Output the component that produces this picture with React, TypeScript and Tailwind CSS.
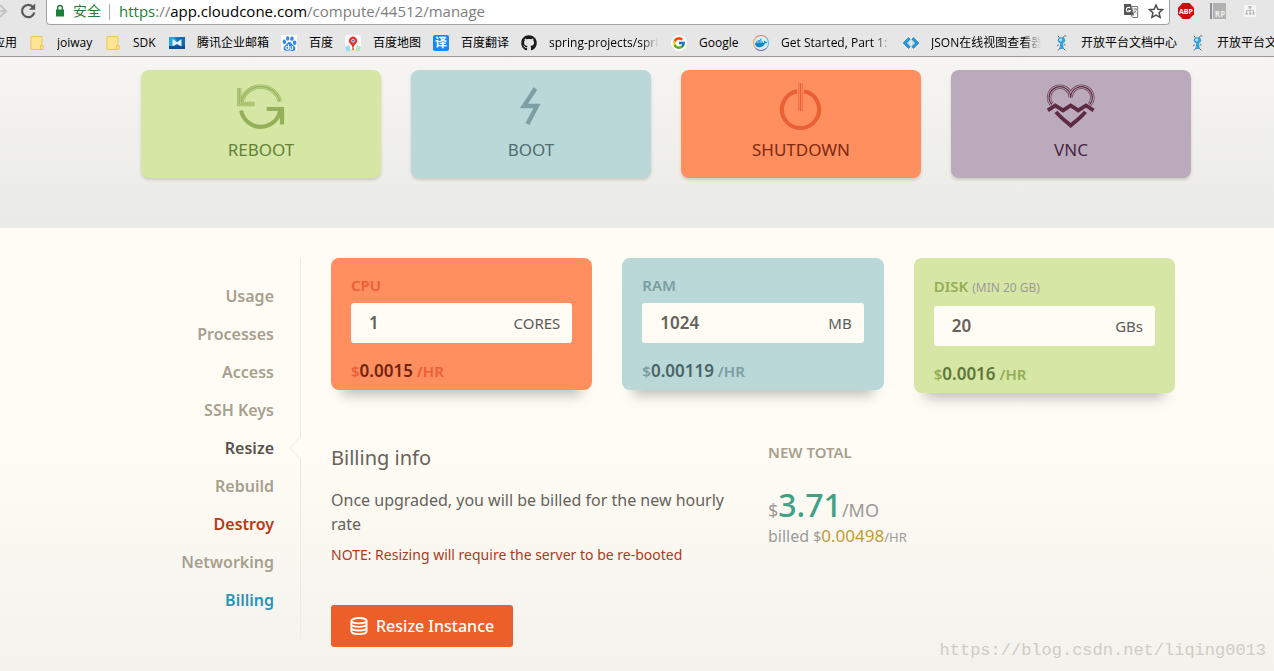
import type { ReactNode } from "react";
import { FaGithub, FaDocker } from "react-icons/fa";
import { FcGoogle } from "react-icons/fc";
import { SiBaidu } from "react-icons/si";

const FolderIcon = () => (
  <svg viewBox="0 0 16 16" className="size-4 shrink-0" aria-hidden="true">
    <path d="M2 1.500h11v9.500h1.200v3.500H2z" fill="#ffe593" stroke="#eec751" />
    <path d="M11.500 14v-3.500h2" fill="none" stroke="#eec751" />
  </svg>
);

const MailIcon = () => (
  <svg viewBox="0 0 16 16" className="size-4 shrink-0" aria-hidden="true">
    <path d="M0 2h16v12H0z" fill="#1267ad" />
    <path d="M0 2h11L0 14z" fill="#2aa5de" />
    <path d="M0 11h16v3H0z" fill="#0b4f94" />
    <path d="M3.500 4L8 7l4.500-3v7.500L8 9l-4.500 2.500z" fill="#dff1fa" />
    <path d="M5 2h6L8 6z" fill="#1877bb" />
  </svg>
);

const PawIcon = () => (
  <span className="flex size-4 shrink-0 items-center justify-center bg-white">
    <SiBaidu className="size-[15px] text-[#3385ff]" aria-hidden="true" />
  </span>
);

const MapIcon = () => (
  <svg viewBox="0 0 16 16" className="size-4 shrink-0" aria-hidden="true">
    <rect width="16" height="16" rx="2" fill="#fafafa" />
    <path d="M0 12l4-2 2 6H1z" fill="#9adcf7" />
    <path d="M16 12l-4-2-2 6h5z" fill="#b5e6c0" />
    <path d="M5 16l3-3 3 3z" fill="#ffe08a" />
    <path d="M8 12L4.600 8a4.100 4.100 0 1 1 6.800 0z" fill="#e8352e" />
    <circle cx="8" cy="5.800" r="1.700" fill="#fff" />
    <circle cx="8" cy="5.800" r="1" fill="#2d6fd2" />
    <path d="M8 10v5" stroke="#b02420" />
  </svg>
);

const TranslateBadge = () => (
  <span
    aria-hidden="true"
    className="flex size-4 shrink-0 items-center justify-center rounded-xs bg-[#1b86f9] text-xs leading-4 font-bold text-white"
  >
    译
  </span>
);

const GoogleIcon = () => (
  <span className="flex size-4 shrink-0 items-center justify-center rounded-full bg-white">
    <FcGoogle className="size-[14px]" aria-hidden="true" />
  </span>
);

const WhaleIcon = () => (
  <span className="flex size-4 shrink-0 items-center justify-center rounded-full border border-t-[#f1775f] border-r-[#4bb5e6] border-b-[#7b63b8] border-l-[#f0a15f] bg-[#d8f0f8]">
    <FaDocker className="size-3 text-[#1488c6]" aria-hidden="true" />
  </span>
);

const CodeIcon = () => (
  <svg viewBox="0 0 16 16" className="size-4 shrink-0" aria-hidden="true">
    <path d="M5.500 2.500L0 8l5.500 5.500 1.700-1.700L3.600 8l3.600-3.800z" fill="#2196d8" stroke="#156ea8" strokeWidth=".5" />
    <path d="M10.500 2.500L16 8l-5.500 5.500-1.700-1.700L12.400 8 8.800 4.200z" fill="#2196d8" stroke="#156ea8" strokeWidth=".5" />
    <path d="M7 5.500L4.600 8 7 10.500M9 5.500L11.400 8 9 10.500" fill="none" stroke="#7fc8ef" />
  </svg>
);

const AntIcon = () => (
  <svg viewBox="0 0 16 16" className="size-4 shrink-0" aria-hidden="true">
    <path d="M7 3.500L5 .8M10 3c.5-2 1.800-2.500 3.300-2M6 9.500L4 11M11 9.500l1.500.5M7 13l-2 2.500M10 13l2.500 2.500" fill="none" stroke="#51585c" strokeWidth=".9" />
    <ellipse cx="8.500" cy="5.200" rx="3.700" ry="3" fill="#2ba2dc" />
    <circle cx="7.800" cy="5" r="1.400" fill="#fff" />
    <circle cx="8" cy="5" r=".6" fill="#174d70" />
    <path d="M7.300 8h2.700l.8 6H6.500z" fill="#2ba2dc" />
  </svg>
);

type Bookmark = { label: string; icon: ReactNode; fade?: boolean; width?: string };

const bookmarks: Bookmark[] = [
  { label: "joiway", icon: <FolderIcon />, width: "w-9" },
  { label: "SDK", icon: <FolderIcon />, width: "w-6" },
  { label: "腾讯企业邮箱", icon: <MailIcon /> },
  { label: "百度", icon: <PawIcon /> },
  { label: "百度地图", icon: <MapIcon /> },
  { label: "百度翻译", icon: <TranslateBadge /> },
  { label: "spring-projects/spring", icon: <FaGithub className="size-4 shrink-0 text-[#1b1b1b]" aria-hidden="true" />, fade: true, width: "w-[110px]" },
  { label: "Google", icon: <GoogleIcon />, width: "w-[42px]" },
  { label: "Get Started, Part 1: Or", icon: <WhaleIcon />, fade: true, width: "w-[110px]" },
  { label: "JSON在线视图查看器", icon: <CodeIcon />, fade: true, width: "w-[110px]" },
  { label: "开放平台文档中心", icon: <AntIcon /> },
  { label: "开放平台文档中心", icon: <AntIcon /> },
];

function BrowserBar() {
  return (
    <header className="h-[57px] overflow-hidden border-b border-[#9d9a9a] bg-[#e6e6e6] font-['Open_Sans','Noto_Sans_CJK_SC',sans-serif]">
      <div className="flex h-[25px] items-start">
        <div className="flex h-6 w-[46px] shrink-0 items-start">
          <button type="button" aria-label="Forward" className="-ml-2 h-6 w-4">
            <svg viewBox="0 0 16 24" className="h-6 w-4" aria-hidden="true">
              <path d="M0 11h13M8 5l6 6-6 6" fill="none" stroke="#c3c3c3" strokeWidth="2" />
            </svg>
          </button>
          <button type="button" aria-label="Reload" className="ml-3 h-6 w-4">
            <svg viewBox="0 0 16 24" className="h-6 w-4" aria-hidden="true">
              <path d="M13.200 7.200A6.200 6.200 0 1 0 14.300 12.500" fill="none" stroke="#5a5a5a" strokeWidth="2.200" />
              <path d="M15.200 3.500v6.300H8.900z" fill="#5a5a5a" />
            </svg>
          </button>
        </div>
        <div className="flex h-[25px] min-w-0 flex-1 items-start rounded-b-sm border border-t-0 border-[#a3a3a3] bg-white pr-[5px] pl-2">
          <svg viewBox="0 0 10 22" className="h-[22px] w-[10px] shrink-0" aria-hidden="true">
            <path d="M1 9.500h8v7H1z" fill="#1a7f37" />
            <path d="M2.700 10V7.800a2.300 2.300 0 0 1 4.600 0V10" fill="none" stroke="#1a7f37" strokeWidth="1.400" />
          </svg>
          <span className="ml-2 text-sm leading-[22px] text-[#1a7f37]">安全</span>
          <span className="mt-1 ml-2 h-4 w-px shrink-0 bg-[#a9a9a9]" />
          <p className="ml-[9px] min-w-0 flex-1 truncate text-[15px] leading-[22px] text-[#7e7e7e]">
            <span className="text-[#1a7f37]">https</span>://<span className="text-black">app.cloudcone.com</span>/compute/44512/manage
          </p>
          <button type="button" aria-label="Translate" className="h-[22px] w-4">
            <svg viewBox="0 0 16 22" className="h-[22px] w-4" aria-hidden="true">
              <path d="M1 4h7l2.500 11H1z" fill="#555" />
              <path d="M8.500 6.500h6.200v11H9.500l-1.300-2.500h2.600z" fill="#fff" stroke="#777" />
              <path d="M7.200 8.200a2.200 2.200 0 1 0 .3 2.300H5.300" fill="none" stroke="#fff" strokeWidth="1.100" />
              <path d="M10.500 9h3.500M12.300 8v1M13.500 9c-.3 1.800-1.200 3-2.500 4M11 10.200c.6 1.200 1.500 2.200 2.600 2.800" fill="none" stroke="#777" strokeWidth=".8" />
            </svg>
          </button>
          <button type="button" aria-label="Bookmark this page" className="ml-[9px] h-[22px] w-4">
            <svg viewBox="0 0 16 22" className="h-[22px] w-4" aria-hidden="true">
              <path d="M8 5l1.900 4.200 4.600.5-3.400 3.100 1 4.500L8 15l-4.100 2.300 1-4.500L1.500 9.700l4.600-.5z" fill="none" stroke="#4c4c4c" strokeWidth="1.500" />
            </svg>
          </button>
        </div>
        <div className="flex w-[104px] shrink-0 items-start gap-4 pl-2">
          <button type="button" aria-label="Ad blocker" className="h-[22px] w-4">
            <svg viewBox="0 0 16 22" className="h-[22px] w-4" aria-hidden="true">
              <path d="M4.700 3h6.600L16 7.700v6.600L11.300 19H4.700L0 14.300V7.700z" fill="#d20a0a" />
              <text x="8" y="13.500" textAnchor="middle" fontSize="7" fontWeight="700" fill="#fff">ABP</text>
            </svg>
          </button>
          <button type="button" aria-label="RP" className="h-[22px] w-4">
            <svg viewBox="0 0 16 22" className="h-[22px] w-4" aria-hidden="true">
              <path d="M0 3h2v16H0z" fill="#8f8f8f" />
              <path d="M3 3h13v16H3z" fill="#b1b1b1" />
              <text x="10" y="17" textAnchor="middle" fontSize="8" fontWeight="700" fill="#eee">RP</text>
            </svg>
          </button>
          <button type="button" aria-label="Site map" className="h-[22px] w-4">
            <svg viewBox="0 0 16 22" className="h-[22px] w-4" aria-hidden="true">
              <rect x="2" y="5" width="12" height="12" rx="1.500" fill="#f6f6f6" />
              <path d="M8 8v5M4.500 13v-2.500h7V13" fill="none" stroke="#bbb" />
              <path d="M6.500 6h3v2.500h-3zM3.500 12.500h2.300v2.300H3.500zM6.900 12.500h2.300v2.300H6.900zM10.300 12.500h2.300v2.300h-2.300z" fill="#bbb" />
            </svg>
          </button>
        </div>
      </div>
      <nav aria-label="Bookmarks" className="flex h-9 items-center overflow-hidden text-xs whitespace-nowrap text-black">
        <a href="#apps" className="flex w-[17px] shrink-0 justify-end overflow-hidden">应用</a>
        {bookmarks.map((b, i) => (
          <a key={i} href="#bookmark" className="ml-3 flex shrink-0 items-center gap-3">
            {b.icon}
            <span
              className={`block overflow-x-clip ${b.width ?? ""} ${
                b.fade ? "[mask-image:linear-gradient(to_right,black_84%,transparent)]" : ""
              }`}
            >
              {b.label}
            </span>
          </a>
        ))}
      </nav>
    </header>
  );
}

/* Triple-line stroke: a dark band, hollowed out, with a fine core line. */
function EtchedPath({ d, dark, light }: { d: string; dark: string; light: string }) {
  return (
    <g fill="none">
      <path d={d} stroke={dark} strokeWidth="4.400" opacity=".8" />
      <path d={d} stroke={light} strokeWidth="2.800" />
      <path d={d} stroke={dark} strokeWidth="1.200" />
    </g>
  );
}

function ActionIcon({ children }: { children: ReactNode }) {
  return (
    <svg viewBox="0 0 50 48" className="h-12 w-[50px]" aria-hidden="true">
      {children}
    </svg>
  );
}

const actions = [
  {
    label: "REBOOT",
    style: "bg-[#d6e6a5] text-[#64813a]",
    icon: (
      <ActionIcon>
        <EtchedPath d="M5.200 20.500A19.800 19.800 0 0 1 43.800 19.500" dark="#94b058" light="#c3d68f" />
        <EtchedPath d="M3.200 6V22H18.500" dark="#94b058" light="#c3d68f" />
        <path d="M5.200 28.500A19.800 19.800 0 0 0 44.200 28.500M30.700 27H46V42.500" fill="none" stroke="#94b058" strokeWidth="4.200" />
      </ActionIcon>
    ),
  },
  {
    label: "BOOT",
    style: "bg-[#b9d8d7] text-[#506d70]",
    icon: (
      <ActionIcon>
        <path d="M29.500 6.500L17.800 24H31L21.500 42" fill="none" stroke="#7b9fa3" strokeWidth="4.300" />
      </ActionIcon>
    ),
  },
  {
    label: "SHUTDOWN",
    style: "bg-[#ff8f5f] text-[#7d2a10]",
    icon: (
      <ActionIcon>
        <path d="M28 9.200A18.600 18.600 0 1 1 21 9.200" fill="none" stroke="#eb5f34" strokeWidth="4" />
        <EtchedPath d="M24.500 1.500V29" dark="#eb5f34" light="#fb8a5d" />
      </ActionIcon>
    ),
  },
  {
    label: "VNC",
    style: "bg-[#baaabb] text-[#4a2645]",
    icon: (
      <ActionIcon>
        <EtchedPath
          d="M5.700 22.500A10.800 10.800 0 1 1 24.700 15.500A10.800 10.800 0 1 1 43.700 22.500"
          dark="#5e2a41"
          light="#baaabb"
        />
        <path
          d="M1.800 28.400L9.300 23.500L17 28.400L24.700 23.500L32.300 28.400L40 23.500L47.600 28.400M10 29.800C14 35 20 39.500 24.700 43.500C29.400 39.500 35.400 35 39.400 29.800"
          fill="none"
          stroke="#5e2a41"
          strokeWidth="3.800"
        />
      </ActionIcon>
    ),
  },
];

function ActionBar() {
  return (
    <section className="bg-linear-to-b from-[#f6f5f2] to-[#eaeae6] pt-[13px] pr-[83px] pb-[50px] pl-[141px]">
      <div className="grid grid-cols-4 gap-[30px]">
        {actions.map((a) => (
          <button
            key={a.label}
            type="button"
            className={`flex h-[108px] flex-col items-center rounded-lg pt-3 text-[17px] leading-6 shadow-[0_2px_3px_rgba(90,80,50,0.22)] ${a.style}`}
          >
            {a.icon}
            <span className="mt-2">{a.label}</span>
          </button>
        ))}
      </div>
    </section>
  );
}

const navItems = [
  { label: "Usage", color: "text-[#a6a08f]" },
  { label: "Processes", color: "text-[#a6a08f]" },
  { label: "Access", color: "text-[#a6a08f]" },
  { label: "SSH Keys", color: "text-[#a6a08f]" },
  { label: "Resize", color: "text-[#57534d]", active: true },
  { label: "Rebuild", color: "text-[#a6a08f]" },
  { label: "Destroy", color: "text-[#b93a12]" },
  { label: "Networking", color: "text-[#a6a08f]" },
  { label: "Billing", color: "text-[#2d93b8]" },
];

function SideNav() {
  return (
    <nav aria-label="Server" className="w-[301px] shrink-0 border-r border-[#eeebe4] pt-[19px] pb-5">
      <ul>
        {navItems.map((n) => (
          <li key={n.label} className="relative h-[38px] pr-[26px] text-right leading-[38px] font-semibold">
            <a href="#nav" className={n.color} aria-current={n.active ? "page" : undefined}>
              {n.label}
            </a>
            {n.active && (
              <svg viewBox="0 0 13 24" className="absolute top-[7px] -right-px h-6 w-[13px]" aria-hidden="true">
                <path d="M13 1L1.500 12L13 23z" fill="#fffcf5" />
                <path d="M12.500 1L1.500 12L12.500 23" fill="none" stroke="#eeebe4" />
              </svg>
            )}
          </li>
        ))}
      </ul>
    </nav>
  );
}

const resources = [
  {
    id: "cpu", label: "CPU", value: "1", unit: "CORES", price: "0.0015",
    card: "bg-[#ff8f5f]", tint: "text-[#ec6035]", strong: "text-[#6f2510]", line: "leading-6",
  },
  {
    id: "ram", label: "RAM", value: "1024", unit: "MB", price: "0.00119",
    card: "bg-[#b9d8d7]", tint: "text-[#7a9da1]", strong: "text-[#4a6568]", line: "leading-6",
  },
  {
    id: "disk", label: "DISK", hint: "(MIN 20 GB)", value: "20", unit: "GBs", price: "0.0016",
    card: "bg-[#d6e6a5]", tint: "text-[#94ae55]", strong: "text-[#5f783a]", line: "leading-[27px]",
  },
];

function ResourceCards() {
  return (
    <div className="grid grid-cols-3 items-start gap-[30px]">
      {resources.map((r) => (
        <div
          key={r.id}
          className={`rounded-lg px-5 pt-[15px] pb-[7px] shadow-[0_16px_12px_-11px_rgba(0,0,0,0.25)] ${r.card}`}
        >
          <label htmlFor={r.id} className={`block text-[15px] font-semibold ${r.line} ${r.tint}`}>
            {r.label}
            {r.hint && <span className="ml-1 text-xs font-normal text-[#9b9b9b]">{r.hint}</span>}
          </label>
          <div className="mt-[6px] flex h-10 items-center rounded-[3px] bg-[#fffcf5] pr-3 pl-[18px]">
            <input
              id={r.id}
              type="text"
              inputMode="numeric"
              defaultValue={r.value}
              className="w-0 min-w-0 flex-1 bg-transparent text-[17px] font-semibold text-[#666159] outline-none"
            />
            <span className="text-[15px] leading-6 text-[#5b5b5b]">{r.unit}</span>
          </div>
          <p className={`mt-4 text-[15px] leading-6 font-semibold ${r.tint}`}>
            $<span className={`text-[17px] leading-6 ${r.strong}`}>{r.price}</span> /HR
          </p>
        </div>
      ))}
    </div>
  );
}

function DatabaseIcon() {
  return (
    <svg viewBox="0 0 18 18" className="size-[18px]" fill="none" stroke="#fff" strokeWidth="1.800" aria-hidden="true">
      <ellipse cx="9" cy="3.700" rx="7.600" ry="2.700" />
      <path d="M1.400 3.700v10.800c0 1.500 3.400 2.600 7.600 2.600s7.600-1.100 7.600-2.600V3.700" />
      <path d="M1.400 7.300c0 1.500 3.400 2.600 7.600 2.600s7.600-1.100 7.600-2.600M1.400 10.900c0 1.500 3.400 2.600 7.600 2.600s7.600-1.100 7.600-2.600" />
    </svg>
  );
}

function BillingInfo() {
  return (
    <div className="mt-[49px] grid grid-cols-2 gap-[30px]">
      <div>
        <h2 className="text-xl leading-8 text-[#66625b]">Billing info</h2>
        <p className="mt-[14px] text-base text-[#66625b]">
          Once upgraded, you will be billed for the new hourly rate
        </p>
        <p className="mt-[7px] text-sm leading-6 text-[#ad3a1d]">
          NOTE: Resizing will require the server to be re-booted
        </p>
        <button
          type="button"
          className="mt-[38px] flex h-[42px] items-center gap-2 rounded-[3px] bg-[#ec5f28] px-[19px] text-base font-medium text-white"
        >
          <DatabaseIcon />
          Resize Instance
        </button>
      </div>
      <div className="text-[#9b9b98]">
        <h3 className="text-[15px] leading-5 font-semibold text-[#a6a08f]">NEW TOTAL</h3>
        <p className="mt-[27px] text-lg leading-8">
          $<span className="text-[32px] leading-8 font-medium text-[#3fa284]">3.71</span>/MO
        </p>
        <p className="text-[17px] leading-5">
          <span className="text-base leading-5">billed </span>
          <span className="text-sm leading-5">$</span>
          <span className="text-[#c29a35]">0.00498</span>
          <span className="text-[13px] leading-5">/HR</span>
        </p>
      </div>
    </div>
  );
}

export default function App() {
  return (
    <div className="flex min-h-screen flex-col font-['Noto_Sans','Noto_Sans_CJK_SC',sans-serif]">
      <BrowserBar />
      <main className="flex flex-1 flex-col">
        <ActionBar />
        <section className="relative flex flex-1 items-start bg-linear-to-b from-[#fffcf5] from-50% to-[#f4f2ed] pt-[30px] pb-6">
          <SideNav />
          <div className="min-w-0 flex-1 pr-[99px] pl-[30px]">
            <ResourceCards />
            <BillingInfo />
          </div>
          <p className="absolute right-2 bottom-2 font-['Liberation_Mono',monospace] text-[17px] leading-6 text-[#cfccc6]">
            https://blog.csdn.net/liqing0013
          </p>
        </section>
      </main>
    </div>
  );
}
